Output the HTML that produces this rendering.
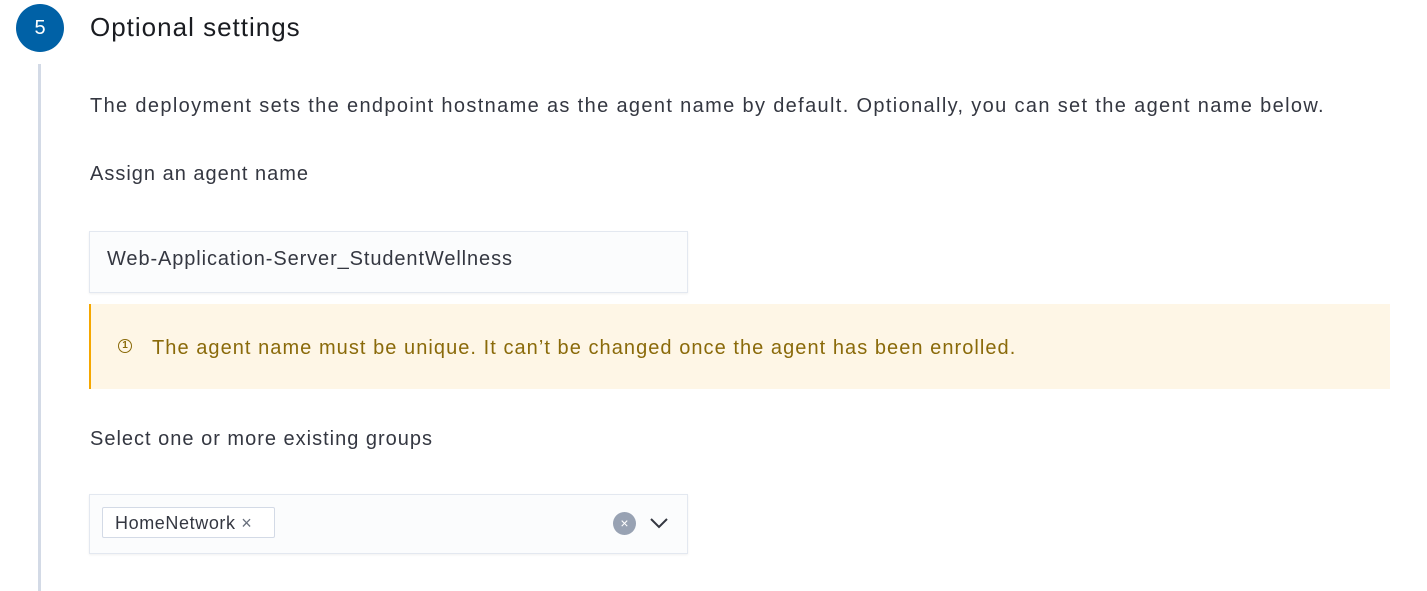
<!DOCTYPE html>
<html><head><style>
body{margin:0;width:1427px;height:591px;background:#fff;font-family:"Liberation Sans",sans-serif;position:relative;overflow:hidden;color:#343741}
.a{position:absolute;white-space:nowrap}
.t{font-size:20px;letter-spacing:1px}
</style></head><body>
<div class="a" style="left:16px;top:4px;width:48px;height:48px;border-radius:50%;background:#0061a6;color:#fff;font-size:20px;line-height:48px;text-align:center">5</div>
<div class="a" style="left:90px;top:12px;font-size:26px;letter-spacing:1px;color:#1a1c21">Optional settings</div>
<div class="a" style="left:38px;top:64px;width:3px;height:527px;background:#d3dae6"></div>
<div class="a t" style="left:90px;top:95px;letter-spacing:1.35px">The deployment sets the endpoint hostname as the agent name by default. Optionally, you can set the agent name below.</div>
<div class="a t" style="left:90px;top:163px">Assign an agent name</div>
<div class="a" style="left:89px;top:231px;width:597px;height:60px;background:#fbfcfd;border:1px solid #e3e8f0;box-shadow:0 1px 2px rgba(0,0,0,.06)"></div>
<div class="a t" style="left:107px;top:248px;letter-spacing:0.9px">Web-Application-Server_StudentWellness</div>
<div class="a" style="left:89px;top:304px;width:1301px;height:85px;background:#fef6e6;border-left:2px solid #f5a700;box-sizing:border-box"></div>
<div class="a" style="left:118px;top:339px;width:14px;height:14px;border:1.6px solid #8a6a0a;border-radius:50%;box-sizing:border-box;font-size:10px;line-height:11px;text-align:center;color:#8a6a0a;font-weight:bold">1</div>
<div class="a t" style="left:152px;top:337px;color:#8a6a0a;letter-spacing:1.05px">The agent name must be unique. It can’t be changed once the agent has been enrolled.</div>
<div class="a t" style="left:90px;top:428px">Select one or more existing groups</div>
<div class="a" style="left:89px;top:494px;width:597px;height:58px;background:#fbfcfd;border:1px solid #e3e8f0;box-shadow:0 1px 2px rgba(0,0,0,.06)"></div>
<div class="a" style="left:102px;top:507px;width:171px;height:29px;background:#fff;border:1px solid #d3dae6;border-radius:2px"></div>
<div class="a" style="left:115px;top:513px;font-size:18px;letter-spacing:0.6px">HomeNetwork <span style="color:#69707d">×</span></div>
<div class="a" style="left:613px;top:512px;width:23px;height:23px;border-radius:50%;background:#98a2b3;color:#fff;font-size:14px;line-height:23px;text-align:center">×</div>
<svg class="a" style="left:648px;top:515px" width="22" height="16"><path d="M3 4l8 8 8-8" fill="none" stroke="#343741" stroke-width="2"/></svg>
</body></html>
